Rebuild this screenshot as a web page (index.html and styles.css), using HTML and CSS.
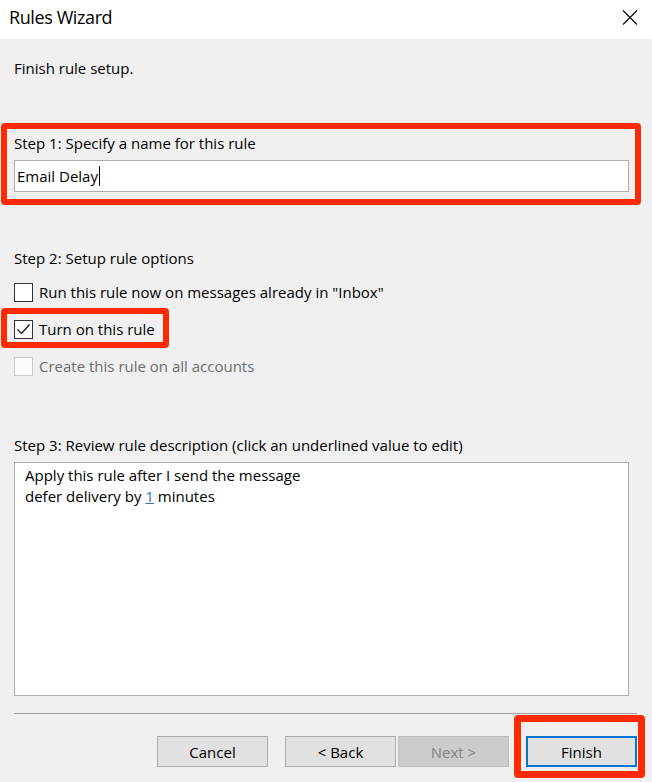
FILE: index.html
```html
<!DOCTYPE html>
<html>
<head>
    <title>Rules Wizard</title>
    <link rel="stylesheet" href="styles.css">
</head>
<body>
    <div class="titlebar">
        <span class="title">Rules Wizard</span>
        <svg class="close" width="16" height="15" viewBox="0 0 16 15">
            <path d="M1 0.5 L15 14.5 M15 0.5 L1 14.5" stroke="#000" stroke-width="1.1" fill="none"/>
        </svg>
    </div>

    <div class="content">
        <div class="intro">Finish rule setup.</div>

        <div class="mark step1">
            <div class="label">Step 1: Specify a name for this rule</div>
            <div class="textbox">Email Delay<span class="caret"></span></div>
        </div>

        <div class="label step2">Step 2: Setup rule options</div>
        <div class="option first">
            <span class="check"></span>
            <span>Run this rule now on messages already in "Inbox"</span>
        </div>
        <div class="mark step2-mark">
            <div class="option">
                <span class="check">
                    <svg width="17" height="17" viewBox="0 0 17 17">
                        <path d="M2.5 8.5 L6.5 12.5 L14.5 3.5" stroke="#222" stroke-width="1.4" fill="none"/>
                    </svg>
                </span>
                <span>Turn on this rule</span>
            </div>
        </div>
        <div class="option disabled">
            <span class="check"></span>
            <span>Create this rule on all accounts</span>
        </div>

        <div class="label step3">Step 3: Review rule description (click an underlined value to edit)</div>
        <div class="description">
            <div>Apply this rule after I send the message</div>
            <div>defer delivery by <span class="value">1</span> minutes</div>
        </div>

        <div class="separator"></div>

        <div class="buttons">
            <button class="btn cancel">Cancel</button>
            <button class="btn back">&lt; Back</button>
            <button class="btn next" disabled>Next &gt;</button>
            <span class="finish-wrap"><button class="btn finish">Finish</button></span>
        </div>
    </div>
</body>
</html>
```

FILE: styles.css
```css
html {
    background-color: #f0f0f0;
}

body {
    margin: 0;
    width: 652px;
    height: 782px;
    font-family: "Open Sans", "Noto Sans", sans-serif;
    font-size: 15px;
    color: #000;
    background-color: #f0f0f0;
    overflow: hidden;
}

.titlebar {
    height: 39px;
    background-color: #fff;
    display: flex;
    align-items: flex-start;
}

.title {
    font-size: 18px;
    line-height: 24px;
    letter-spacing: -0.4px;
    padding-top: 5px;
    padding-left: 9px;
}

.close {
    margin-left: auto;
    margin-top: 10px;
    margin-right: 14px;
}

.content {
    padding: 0 15px 0 14px;
}

.intro {
    line-height: 20px;
    margin-top: 19px;
}

.label {
    line-height: 20px;
}

.mark {
    border: 6px solid #ff2a00;
    border-radius: 4px;
}

.step1 {
    margin-top: 45px;
    margin-left: -13px;
    margin-right: -4px;
    padding: 4px 6px 7px 7px;
}

.textbox {
    margin-top: 7px;
    height: 32px;
    box-sizing: border-box;
    border: 1px solid #abadb3;
    background-color: #fff;
    padding-left: 2px;
    line-height: 30px;
    display: flex;
    align-items: center;
}

.caret {
    display: inline-block;
    width: 1px;
    height: 20px;
    background-color: #000;
    margin-left: 1px;
}

.step2 {
    margin-top: 43px;
}

.option {
    display: flex;
    align-items: center;
    height: 19px;
    line-height: 19px;
}

.option.first {
    margin-top: 15px;
}

.check {
    width: 19px;
    height: 19px;
    box-sizing: border-box;
    border: 1px solid #333;
    background-color: #fff;
    margin-right: 6px;
    display: flex;
    align-items: center;
    justify-content: center;
}

.step2-mark {
    width: fit-content;
    margin-top: 6px;
    margin-left: -13px;
    padding: 6px 8px 3px 7px;
}

.option.disabled {
    margin-top: 9px;
    color: #6d6d6d;
}

.option.disabled .check {
    border-color: #cccccc;
    background-color: #fcfcfc;
}

.step3 {
    margin-top: 59px;
}

.description {
    margin-top: 7px;
    margin-right: 8px;
    height: 234px;
    box-sizing: border-box;
    border: 1px solid #abadb3;
    background-color: #fff;
    padding: 2px 10px;
    line-height: 21px;
}

.value {
    color: #3a6fb8;
    text-decoration: underline;
}

.separator {
    margin-top: 17px;
    height: 1px;
    background-color: #a0a0a0;
}

.buttons {
    margin-top: 22px;
    display: flex;
    justify-content: flex-end;
}

.btn {
    width: 111px;
    height: 31px;
    font-family: "Open Sans", "Noto Sans", sans-serif;
    font-size: 15px;
    color: #000;
    background-color: #e1e1e1;
    border: 1px solid #adadad;
    padding: 0;
}

.back {
    margin-left: 17px;
}

.next {
    margin-left: 2px;
    background-color: #cccccc;
    border-color: #bfbfbf;
    color: #838383;
}

.finish-wrap {
    position: relative;
    margin-left: 17px;
    display: flex;
}

.finish {
    border: 2px solid #0078d7;
}

.finish-wrap::after {
    content: "";
    position: absolute;
    left: -12px;
    right: -8px;
    top: -21px;
    bottom: -11px;
    border: 7px solid #ff2a00;
    border-radius: 4px;
}
```
